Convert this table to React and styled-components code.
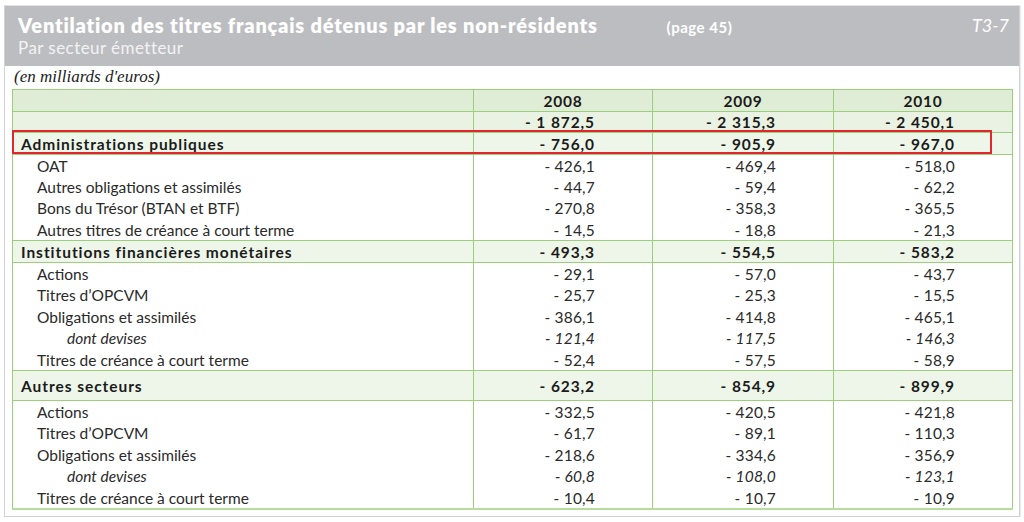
import React from 'react'
import styled, { createGlobalStyle } from 'styled-components'

const GlobalStyle = createGlobalStyle`
  html, body {
    margin: 0;
    padding: 0;
    background: #ffffff;
  }
  body {
    font-family: Lato, "Noto Sans", sans-serif;
    color: #222;
  }
`

const years = ['2008', '2009', '2010']

const rows = [
  { kind: 'total', label: '', values: ['- 1 872,5', '- 2 315,3', '- 2 450,1'] },
  { kind: 'section', label: 'Administrations publiques', values: ['- 756,0', '- 905,9', '- 967,0'] },
  { kind: 'item', label: 'OAT', values: ['- 426,1', '- 469,4', '- 518,0'] },
  { kind: 'item', label: 'Autres obligations et assimilés', values: ['- 44,7', '- 59,4', '- 62,2'] },
  { kind: 'item', label: 'Bons du Trésor (BTAN et BTF)', values: ['- 270,8', '- 358,3', '- 365,5'] },
  { kind: 'item', label: 'Autres titres de créance à court terme', values: ['- 14,5', '- 18,8', '- 21,3'] },
  { kind: 'section', label: 'Institutions financières monétaires', values: ['- 493,3', '- 554,5', '- 583,2'] },
  { kind: 'item', label: 'Actions', values: ['- 29,1', '- 57,0', '- 43,7'] },
  { kind: 'item', label: 'Titres d’OPCVM', values: ['- 25,7', '- 25,3', '- 15,5'] },
  { kind: 'item', label: 'Obligations et assimilés', values: ['- 386,1', '- 414,8', '- 465,1'] },
  { kind: 'sub', label: 'dont devises', values: ['- 121,4', '- 117,5', '- 146,3'] },
  { kind: 'item', label: 'Titres de créance à court terme', values: ['- 52,4', '- 57,5', '- 58,9'] },
  { kind: 'section', tall: true, label: 'Autres secteurs', values: ['- 623,2', '- 854,9', '- 899,9'] },
  { kind: 'item', label: 'Actions', values: ['- 332,5', '- 420,5', '- 421,8'] },
  { kind: 'item', label: 'Titres d’OPCVM', values: ['- 61,7', '- 89,1', '- 110,3'] },
  { kind: 'item', label: 'Obligations et assimilés', values: ['- 218,6', '- 334,6', '- 356,9'] },
  { kind: 'sub', label: 'dont devises', values: ['- 60,8', '- 108,0', '- 123,1'] },
  { kind: 'item', label: 'Titres de créance à court terme', values: ['- 10,4', '- 10,7', '- 10,9'] },
]

function App() {
  return (
    <>
      <GlobalStyle />
      <Frame>
        <Banner>
          <TitleBlock>
            <TitleLine>
              <Title>Ventilation des titres français détenus par les non-résidents</Title>
              <PageRef>(page 45)</PageRef>
            </TitleLine>
            <Subtitle>Par secteur émetteur</Subtitle>
          </TitleBlock>
          <TableCode>T3-7</TableCode>
        </Banner>
        <Body>
          <Unit>(en milliards d'euros)</Unit>
          <TableWrap>
            <Table>
              <colgroup>
                <col style={{ width: 461 }} />
                <col style={{ width: 179 }} />
                <col style={{ width: 181 }} />
                <col style={{ width: 179 }} />
              </colgroup>
              <tbody>
                <Row $kind="head">
                  <Label $kind="head" />
                  {years.map((y) => (
                    <Year key={y}>{y}</Year>
                  ))}
                </Row>
                {rows.map((r, i) => (
                  <Row key={i} $kind={r.kind} $tall={r.tall} $last={i === rows.length - 1}>
                    <Label $kind={r.kind}>{r.label}</Label>
                    {r.values.map((v, j) => (
                      <Num key={j} $kind={r.kind}>
                        {v}
                      </Num>
                    ))}
                  </Row>
                ))}
              </tbody>
            </Table>
            <Highlight />
          </TableWrap>
        </Body>
      </Frame>
    </>
  )
}

const Frame = styled.div`
  margin: 5px 4px 0 4px;
  width: 1016px;
  height: 512px;
  box-sizing: border-box;
  border: 1px solid #d2d2d2;
  border-top-color: #e2e2e2;
  box-shadow: 1px 1px 1px rgba(0, 0, 0, 0.08);
`

const Banner = styled.div`
  height: 60px;
  background: #bcbdc0;
  display: flex;
  justify-content: space-between;
  align-items: flex-start;
  padding: 6px 10px 0 13px;
  box-sizing: border-box;
`

const TitleBlock = styled.div`
  display: flex;
  flex-direction: column;
`

const TitleLine = styled.div`
  display: flex;
  align-items: baseline;
`

const Title = styled.h1`
  margin: 0;
  font-size: 20px;
  line-height: 26px;
  font-weight: 800;
  color: #ffffff;
  letter-spacing: 0.78px;
`

const PageRef = styled.span`
  margin-left: 69px;
  font-size: 15px;
  font-weight: 700;
  letter-spacing: 0.5px;
  color: #ffffff;
`

const Subtitle = styled.div`
  font-size: 17px;
  line-height: 20px;
  letter-spacing: 0.45px;
  color: #f3f3f3;
`

const TableCode = styled.div`
  font-size: 18px;
  line-height: 26px;
  font-style: italic;
  color: #ffffff;
`

const Body = styled.div`
  padding: 0 6px 0 7px;
`

const Unit = styled.div`
  font-family: "Liberation Serif", "Times New Roman", serif;
  font-style: italic;
  font-size: 17px;
  line-height: 22px;
  height: 23px;
  padding-left: 2px;
  color: #222;
`

const TableWrap = styled.div`
  position: relative;
  width: 1000px;
`

const Table = styled.table`
  width: 1000px;
  table-layout: fixed;
  border-collapse: collapse;
  border-left: 1px solid #9ccf7c;
  border-right: 1px solid #9ccf7c;
  font-size: 15.5px;
`

const rowBg = {
  head: '#e0edd6',
  total: '#eaf3e3',
  section: '#eef6ea',
  item: '#ffffff',
  sub: '#ffffff',
}

const rowHeight = {
  head: 22,
  total: 21,
  section: 22,
  item: 21.6,
  sub: 21.6,
}

const Row = styled.tr`
  background: ${(p) => rowBg[p.$kind]};
  height: ${(p) => (p.$tall ? 30 : rowHeight[p.$kind])}px;
  border-top: ${(p) => (p.$kind === 'item' || p.$kind === 'sub' ? 'none' : '1px solid #9ccf7c')};
  border-bottom: ${(p) =>
    p.$last ? '2px solid #b6dd9c' : p.$kind === 'section' ? '1px solid #9ccf7c' : 'none'};
`

const Cell = styled.td`
  padding: 0;
  vertical-align: middle;
  white-space: nowrap;
  border-left: 1px solid #9ccf7c;
  line-height: 18px;
`

const labelIndent = {
  head: 7,
  total: 7,
  section: 8,
  item: 24,
  sub: 54,
}

const isStrong = (k) => k === 'section' || k === 'total'

const Label = styled(Cell)`
  border-left: none;
  padding-left: ${(p) => labelIndent[p.$kind]}px;
  font-weight: ${(p) => (isStrong(p.$kind) ? 700 : 400)};
  letter-spacing: ${(p) => (isStrong(p.$kind) ? '0.95px' : '0')};
  font-style: ${(p) => (p.$kind === 'sub' ? 'italic' : 'normal')};
  color: ${(p) => (isStrong(p.$kind) ? '#1b1b1b' : '#2a2a2a')};
`

const Year = styled(Cell)`
  text-align: center;
  font-weight: 700;
  letter-spacing: 0.8px;
  color: #1b1b1b;
`

const Num = styled(Cell)`
  text-align: right;
  padding-right: 57px;
  font-weight: ${(p) => (isStrong(p.$kind) ? 700 : 400)};
  letter-spacing: ${(p) => (isStrong(p.$kind) ? '0.9px' : '0.2px')};
  font-style: ${(p) => (p.$kind === 'sub' ? 'italic' : 'normal')};
  color: ${(p) => (isStrong(p.$kind) ? '#1b1b1b' : '#2a2a2a')};
`

const Highlight = styled.div`
  position: absolute;
  left: 0;
  top: 41px;
  width: 980px;
  height: 24px;
  box-sizing: border-box;
  border: 2px solid #e3262b;
  pointer-events: none;
`

export default App
